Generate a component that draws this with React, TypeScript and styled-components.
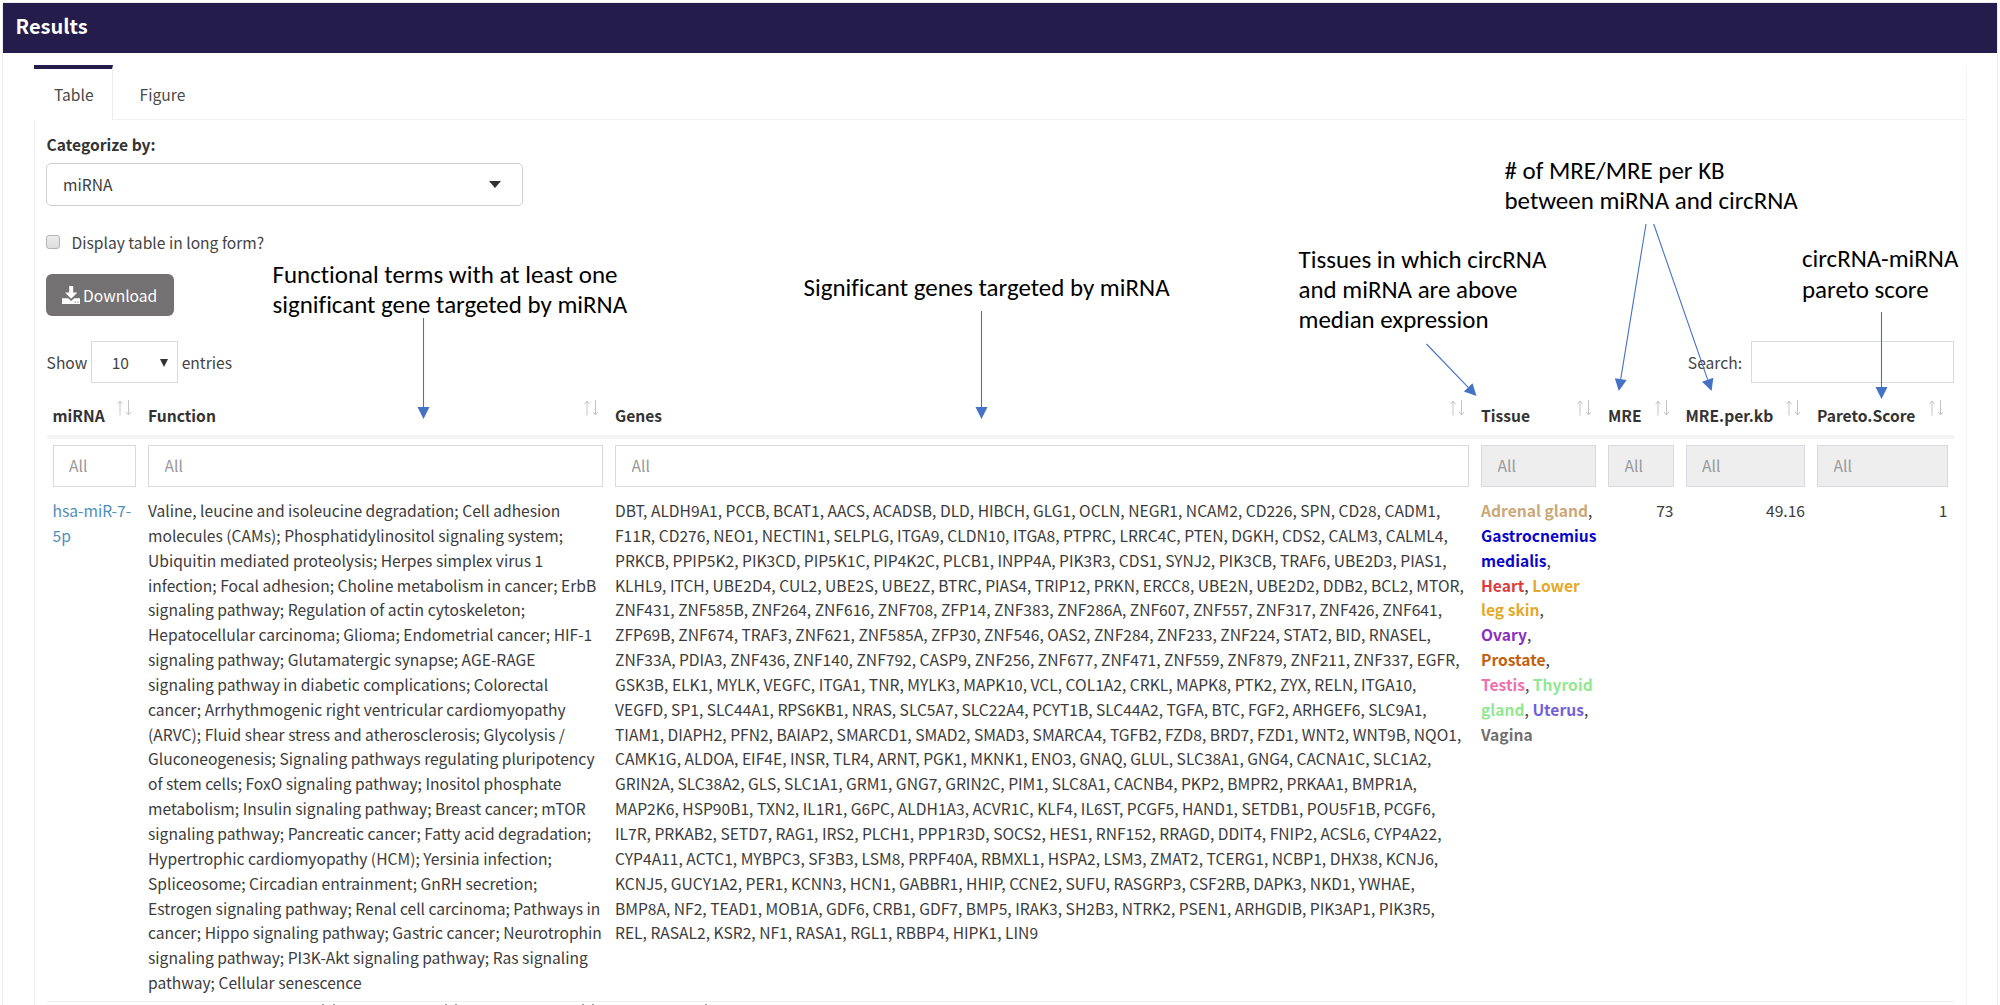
import React from 'react';
import styled, { createGlobalStyle } from 'styled-components';

const sans = `'Source Sans Pro', 'Noto Sans CJK SC', 'Open Sans', sans-serif`;
const navy = '#241c4a';
const hairline = '#f1f1f2';
const fieldBorder = '#d8dadf';

const GlobalStyle = createGlobalStyle`
  * { box-sizing: border-box; }
  body { margin: 0; background: #fff; overflow: hidden; }
`;

const Page = styled.div`
  position: relative;
  width: 2000px;
  height: 1005px;
  padding: 2px 2px 0;
  overflow: hidden;
  color: #3c3c3c;
  font: 400 15.62px/24.85px ${sans};
`;

const ResultsBox = styled.section`
  height: 1010px;
  border: 1px solid #ececf0;
  border-bottom: 0;
`;

const BoxHeader = styled.header`
  height: 50px;
  padding-left: 12.5px;
  background: ${navy};
  color: #fff;
  font-size: 20px;
  font-weight: 700;
  line-height: 46px;
`;

const TabBox = styled.div`
  margin: 12px 30px 0 31px;
  height: 960px;
  border-left: 1px solid ${hairline};
  border-right: 1px solid #f6f6f6;
`;

const TabList = styled.nav`
  display: flex;
  height: 55px;
  margin-left: -1px;
  border-bottom: 1px solid ${hairline};
`;

const Tab = styled.div<{ $active?: boolean }>`
  height: 55px;
  padding: 0 ${(p) => (p.$active ? 18.5 : 27)}px 0 ${(p) => (p.$active ? 20 : 26.5)}px;
  border-top: 4px solid ${(p) => (p.$active ? navy : 'transparent')};
  border-right: 1px solid ${(p) => (p.$active ? '#ececec' : 'transparent')};
  background: ${(p) => (p.$active ? '#fff' : 'transparent')};
  color: #4a4a4a;
  line-height: 50px;
`;

const TabContent = styled.div`
  display: flex;
  flex-direction: column;
  align-items: flex-start;
  padding: 12px 12px 0 11px;
`;

const FieldLabel = styled.label`
  padding-left: 0.6px;
  line-height: 24px;
  font-weight: 700;
  color: #333;
`;

const SelectBox = styled.div`
  display: flex;
  align-items: center;
  justify-content: space-between;
  width: 477px;
  height: 43px;
  margin-top: 7px;
  padding: 0 21px 0 16px;
  border: 1px solid #cfcfcf;
  border-radius: 5px;
`;

const Caret = styled.span<{ $w: number; $h: number }>`
  width: 0;
  height: 0;
  border: ${(p) => p.$w / 2}px solid transparent;
  border-top: ${(p) => p.$h}px solid #333;
  border-bottom: 0;
`;

const CheckRow = styled.label`
  display: flex;
  align-items: center;
  gap: 11.5px;
  height: 24px;
  margin-top: 24px;
  color: #444;
`;

const CheckMark = styled.span`
  width: 14px;
  height: 14px;
  border: 1px solid #b4b4b4;
  border-radius: 3px;
  background: linear-gradient(#ededed, #dcdcdc);
`;

const DownloadButton = styled.button`
  display: flex;
  align-items: center;
  gap: 3px;
  width: 128px;
  height: 42px;
  margin-top: 20px;
  padding: 0 0 0 16px;
  border: 0;
  border-radius: 6px;
  background: #737171;
  color: #fff;
  font: inherit;
`;

const TableControls = styled.div`
  display: flex;
  justify-content: space-between;
  width: 1908px;
  margin-top: 25px;
  padding-left: 0.6px;
  color: #444;
`;

const ControlGroup = styled.label`
  display: flex;
  align-items: center;
  height: 42px;
`;

const LengthSelect = styled.span`
  display: flex;
  align-items: center;
  justify-content: space-between;
  width: 87px;
  height: 42px;
  margin: 0 4px 0 3.4px;
  padding: 1px 9px 0 20px;
  border: 1px solid ${fieldBorder};
`;

const SearchInput = styled.input`
  width: 203px;
  height: 42px;
  margin-left: 9px;
  border: 1px solid ${fieldBorder};
  background: #fff;
`;

const DataTable = styled.div`
  width: 1907.5px;
  margin-left: 0.5px;
`;

const Row = styled.div`
  display: grid;
  grid-template-columns: 95.5px 467px 866px 127px 77.5px 131.5px 142.5px;
`;

const HeadRow = styled(Row)`
  height: 56px;
  border-bottom: 4px solid #f3f3f4;
`;

const BodyRow = styled(Row)`
  height: 510px;
  border-bottom: 1px solid #efefef;
`;

const HeadCell = styled.div`
  display: flex;
  justify-content: space-between;
  padding: 17px 10px 0 6px;
  color: #333;
  font-weight: 700;
  line-height: 30px;
`;

const FilterCell = styled.div`
  height: 53px;
  padding: 6px 6px 5px;
`;

const FilterInput = styled.input`
  display: block;
  width: 100%;
  height: 42px;
  padding: 0 0 2px 15.5px;
  border: 1px solid ${fieldBorder};
  border-radius: 0;
  background: #fff;
  font: inherit;
  &::placeholder { color: #999; opacity: 1; }
  &:disabled { background: #eeeeee; }
`;

const Cell = styled.div<{ $right?: boolean }>`
  padding: 6px;
  text-align: ${(p) => (p.$right ? 'right' : 'left')};
  white-space: pre;
`;

const MirnaLink = styled.a`
  color: #4f8fb8;
`;

const TissueName = styled.b<{ $tone: string }>`
  color: ${(p) => p.$tone};
`;

const CutRow = styled.div`
  display: flex;
  padding: 2px 0 0 275px;
`;

const CutMark = styled.i<{ $gap: number }>`
  width: 2px;
  height: 1px;
  margin-right: ${(p) => p.$gap}px;
  background: #9a9a9a;
`;

const Note = styled.div<{ $x: number; $y: number }>`
  position: absolute;
  left: ${(p) => p.$x}px;
  top: ${(p) => p.$y}px;
  color: #000;
  font: 400 24.95px/30.2px Calibri, Carlito, Lato, sans-serif;
  font-variant-ligatures: none;
  white-space: pre;
`;

const ArrowLayer = styled.svg`
  position: absolute;
  left: 0;
  top: 0;
  pointer-events: none;
`;

const SortIcon = () => (
  <svg width="15" height="16" viewBox="0 0 15 16" fill="none" stroke="#c4c4c4" strokeWidth="1">
    <path d="M3 15.5V1M0.5 4.2L3 1l2.5 3.2M11.5 0v14.8M9 11.8l2.5 3.2 2.5-3.2" />
  </svg>
);

const DownloadIcon = () => (
  <svg width="18" height="18" viewBox="0 0 18 18" fill="#fff">
    <path d="M7.2 0h4v6.4h4.2L9.2 12.8 3 6.4h4.2z" />
    <path d="M0 12.2h6.1l3.1 2.7 3.1-2.7H18V18H0z" />
    <path d="M12.6 15.6h1.2v1.1h-1.2zM15.4 15.6h1.2v1.1h-1.2z" fill="#8a8888" />
  </svg>
);

const columns = [
  { name: 'miRNA', locked: false },
  { name: 'Function', locked: false },
  { name: 'Genes', locked: false },
  { name: 'Tissue', locked: true },
  { name: 'MRE', locked: true },
  { name: 'MRE.per.kb', locked: true },
  { name: 'Pareto.Score', locked: true },
];

const functionLines = [
  'Valine, leucine and isoleucine degradation; Cell adhesion',
  'molecules (CAMs); Phosphatidylinositol signaling system;',
  'Ubiquitin mediated proteolysis; Herpes simplex virus 1',
  'infection; Focal adhesion; Choline metabolism in cancer; ErbB',
  'signaling pathway; Regulation of actin cytoskeleton;',
  'Hepatocellular carcinoma; Glioma; Endometrial cancer; HIF-1',
  'signaling pathway; Glutamatergic synapse; AGE-RAGE',
  'signaling pathway in diabetic complications; Colorectal',
  'cancer; Arrhythmogenic right ventricular cardiomyopathy',
  '(ARVC); Fluid shear stress and atherosclerosis; Glycolysis /',
  'Gluconeogenesis; Signaling pathways regulating pluripotency',
  'of stem cells; FoxO signaling pathway; Inositol phosphate',
  'metabolism; Insulin signaling pathway; Breast cancer; mTOR',
  'signaling pathway; Pancreatic cancer; Fatty acid degradation;',
  'Hypertrophic cardiomyopathy (HCM); Yersinia infection;',
  'Spliceosome; Circadian entrainment; GnRH secretion;',
  'Estrogen signaling pathway; Renal cell carcinoma; Pathways in',
  'cancer; Hippo signaling pathway; Gastric cancer; Neurotrophin',
  'signaling pathway; PI3K-Akt signaling pathway; Ras signaling',
  'pathway; Cellular senescence',
];

const geneLines = [
  'DBT, ALDH9A1, PCCB, BCAT1, AACS, ACADSB, DLD, HIBCH, GLG1, OCLN, NEGR1, NCAM2, CD226, SPN, CD28, CADM1,',
  'F11R, CD276, NEO1, NECTIN1, SELPLG, ITGA9, CLDN10, ITGA8, PTPRC, LRRC4C, PTEN, DGKH, CDS2, CALM3, CALML4,',
  'PRKCB, PPIP5K2, PIK3CD, PIP5K1C, PIP4K2C, PLCB1, INPP4A, PIK3R3, CDS1, SYNJ2, PIK3CB, TRAF6, UBE2D3, PIAS1,',
  'KLHL9, ITCH, UBE2D4, CUL2, UBE2S, UBE2Z, BTRC, PIAS4, TRIP12, PRKN, ERCC8, UBE2N, UBE2D2, DDB2, BCL2, MTOR,',
  'ZNF431, ZNF585B, ZNF264, ZNF616, ZNF708, ZFP14, ZNF383, ZNF286A, ZNF607, ZNF557, ZNF317, ZNF426, ZNF641,',
  'ZFP69B, ZNF674, TRAF3, ZNF621, ZNF585A, ZFP30, ZNF546, OAS2, ZNF284, ZNF233, ZNF224, STAT2, BID, RNASEL,',
  'ZNF33A, PDIA3, ZNF436, ZNF140, ZNF792, CASP9, ZNF256, ZNF677, ZNF471, ZNF559, ZNF879, ZNF211, ZNF337, EGFR,',
  'GSK3B, ELK1, MYLK, VEGFC, ITGA1, TNR, MYLK3, MAPK10, VCL, COL1A2, CRKL, MAPK8, PTK2, ZYX, RELN, ITGA10,',
  'VEGFD, SP1, SLC44A1, RPS6KB1, NRAS, SLC5A7, SLC22A4, PCYT1B, SLC44A2, TGFA, BTC, FGF2, ARHGEF6, SLC9A1,',
  'TIAM1, DIAPH2, PFN2, BAIAP2, SMARCD1, SMAD2, SMAD3, SMARCA4, TGFB2, FZD8, BRD7, FZD1, WNT2, WNT9B, NQO1,',
  'CAMK1G, ALDOA, EIF4E, INSR, TLR4, ARNT, PGK1, MKNK1, ENO3, GNAQ, GLUL, SLC38A1, GNG4, CACNA1C, SLC1A2,',
  'GRIN2A, SLC38A2, GLS, SLC1A1, GRM1, GNG7, GRIN2C, PIM1, SLC8A1, CACNB4, PKP2, BMPR2, PRKAA1, BMPR1A,',
  'MAP2K6, HSP90B1, TXN2, IL1R1, G6PC, ALDH1A3, ACVR1C, KLF4, IL6ST, PCGF5, HAND1, SETDB1, POU5F1B, PCGF6,',
  'IL7R, PRKAB2, SETD7, RAG1, IRS2, PLCH1, PPP1R3D, SOCS2, HES1, RNF152, RRAGD, DDIT4, FNIP2, ACSL6, CYP4A22,',
  'CYP4A11, ACTC1, MYBPC3, SF3B3, LSM8, PRPF40A, RBMXL1, HSPA2, LSM3, ZMAT2, TCERG1, NCBP1, DHX38, KCNJ6,',
  'KCNJ5, GUCY1A2, PER1, KCNN3, HCN1, GABBR1, HHIP, CCNE2, SUFU, RASGRP3, CSF2RB, DAPK3, NKD1, YWHAE,',
  'BMP8A, NF2, TEAD1, MOB1A, GDF6, CRB1, GDF7, BMP5, IRAK3, SH2B3, NTRK2, PSEN1, ARHGDIB, PIK3AP1, PIK3R5,',
  'REL, RASAL2, KSR2, NF1, RASA1, RGL1, RBBP4, HIPK1, LIN9',
];

const tissues = [
  { text: 'Adrenal gland', tone: '#cba878', after: ',\n' },
  { text: 'Gastrocnemius\nmedialis', tone: '#0a05cc', after: ',\n' },
  { text: 'Heart', tone: '#dc3c41', after: ', ' },
  { text: 'Lower\nleg skin', tone: '#e4a928', after: ',\n' },
  { text: 'Ovary', tone: '#8a2fc0', after: ',\n' },
  { text: 'Prostate', tone: '#c2600c', after: ',\n' },
  { text: 'Testis', tone: '#f070ae', after: ', ' },
  { text: 'Thyroid\ngland', tone: '#92e892', after: ', ' },
  { text: 'Uterus', tone: '#7460d8', after: ',\n' },
  { text: 'Vagina', tone: '#707070', after: '' },
];

const notes = [
  { x: 272.5, y: 260, text: 'Functional terms with at least one\nsignificant gene targeted by miRNA' },
  { x: 803.5, y: 273, text: 'Significant genes targeted by miRNA' },
  { x: 1298.5, y: 245, text: 'Tissues in which circRNA\nand miRNA are above\nmedian expression' },
  { x: 1504.5, y: 156, text: '# of MRE/MRE per KB\nbetween miRNA and circRNA' },
  { x: 1802, y: 244.3, text: 'circRNA-miRNA\npareto score' },
];

const arrows: [number, number, number, number][] = [
  [423.5, 318, 423.5, 419],
  [981.5, 311, 981.5, 419],
  [1426.5, 344, 1476.5, 396],
  [1646, 224, 1618.8, 391],
  [1653.7, 224, 1711.6, 391],
  [1881.5, 312, 1881.5, 399],
];

const Arrow = ({ ends: [x1, y1, x2, y2] }: { ends: [number, number, number, number] }) => {
  const len = Math.hypot(x2 - x1, y2 - y1);
  const ux = (x2 - x1) / len;
  const uy = (y2 - y1) / len;
  const bx = x2 - ux * 12;
  const by = y2 - uy * 12;
  return (
    <g>
      <line x1={x1} y1={y1} x2={bx} y2={by} stroke="#4472c4" strokeWidth="1.1" />
      <polygon
        fill="#4472c4"
        points={`${x2},${y2} ${bx - uy * 6},${by + ux * 6} ${bx + uy * 6},${by - ux * 6}`}
      />
    </g>
  );
};

export default function App() {
  return (
    <Page>
      <GlobalStyle />
      <ResultsBox>
        <BoxHeader>Results</BoxHeader>
        <TabBox>
          <TabList>
            <Tab $active>Table</Tab>
            <Tab>Figure</Tab>
          </TabList>
          <TabContent>
            <FieldLabel>Categorize by:</FieldLabel>
            <SelectBox>
              miRNA
              <Caret $w={13} $h={7} />
            </SelectBox>
            <CheckRow>
              <CheckMark />
              Display table in long form?
            </CheckRow>
            <DownloadButton>
              <DownloadIcon />
              Download
            </DownloadButton>
            <TableControls>
              <ControlGroup>
                Show
                <LengthSelect>
                  10
                  <Caret $w={8} $h={8} />
                </LengthSelect>
                entries
              </ControlGroup>
              <ControlGroup>
                Search:
                <SearchInput />
              </ControlGroup>
            </TableControls>
            <DataTable>
              <HeadRow>
                {columns.map((c) => (
                  <HeadCell key={c.name}>
                    {c.name}
                    <SortIcon />
                  </HeadCell>
                ))}
              </HeadRow>
              <Row>
                {columns.map((c) => (
                  <FilterCell key={c.name}>
                    <FilterInput placeholder="All" disabled={c.locked} />
                  </FilterCell>
                ))}
              </Row>
              <BodyRow>
                <Cell>
                  <MirnaLink>{'hsa-miR-7-\n5p'}</MirnaLink>
                </Cell>
                <Cell>{functionLines.join('\n')}</Cell>
                <Cell>{geneLines.join('\n')}</Cell>
                <Cell>
                  {tissues.map((t) => (
                    <React.Fragment key={t.text}>
                      <TissueName $tone={t.tone}>{t.text}</TissueName>
                      {t.after}
                    </React.Fragment>
                  ))}
                </Cell>
                <Cell $right>73</Cell>
                <Cell $right>49.16</Cell>
                <Cell $right>1</Cell>
              </BodyRow>
              <CutRow>
                {[9, 110, 8, 125, 8, 111, 0].map((gap, i) => (
                  <CutMark key={i} $gap={gap} />
                ))}
              </CutRow>
            </DataTable>
          </TabContent>
        </TabBox>
      </ResultsBox>
      <ArrowLayer width="2000" height="1005" viewBox="0 0 2000 1005">
        {arrows.map((ends, i) => (
          <Arrow key={i} ends={ends} />
        ))}
      </ArrowLayer>
      {notes.map((n) => (
        <Note key={n.text} $x={n.x} $y={n.y}>
          {n.text}
        </Note>
      ))}
    </Page>
  );
}
